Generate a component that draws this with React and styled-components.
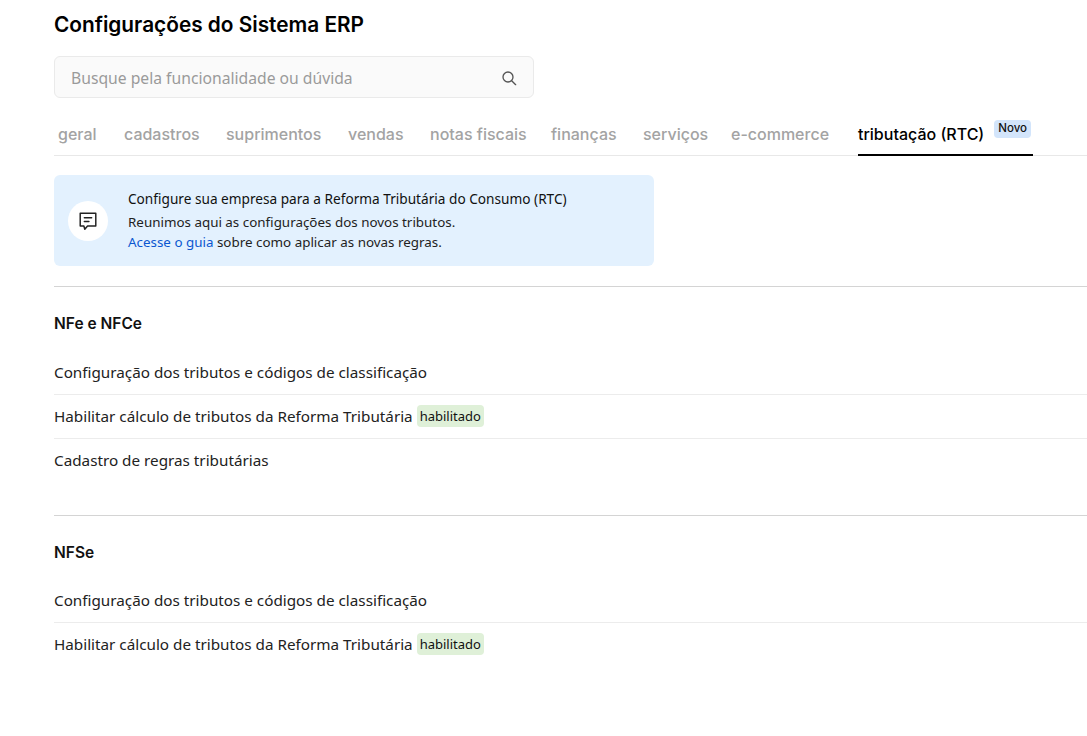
import React from 'react';
import styled, { createGlobalStyle } from 'styled-components';

const heading = "Inter, 'Liberation Sans', sans-serif";
const body = "'Noto Sans', 'Open Sans', sans-serif";

const GlobalStyle = createGlobalStyle`
  html, body { margin: 0; padding: 0; background: #fff; }
  body { font-family: ${body}; color: #1a1a1a; }
`;

const Page = styled.div`
  width: 1087px;
  height: 736px;
  overflow: hidden;
  padding: 12px 0 0 54px;
  box-sizing: border-box;
`;

const Title = styled.h1`
  margin: 0 0 19px;
  font: 600 20.8px/25px ${heading};
  color: #000;
`;

const SearchBox = styled.div`
  width: 480px;
  height: 42px;
  box-sizing: border-box;
  display: flex;
  align-items: center;
  justify-content: space-between;
  padding: 1px 16px 0;
  background: #fafafa;
  border: 1px solid #eaeaea;
  border-radius: 6px;
  font-size: 15.7px;
  color: #9a9a9a;
`;

const Tabs = styled.nav`
  display: flex;
  height: 58px;
  box-sizing: border-box;
  padding-left: 4px;
  border-bottom: 1px solid #e8e8e8;
`;

const Tab = styled.div`
  display: flex;
  align-items: flex-start;
  gap: 10px;
  box-sizing: border-box;
  width: ${({ $w }) => $w}px;
  padding-top: 25.5px;
  font: 500 16px/20px ${heading};
  white-space: nowrap;
  color: ${({ $active }) => ($active ? '#000' : '#a3a3a3')};
  border-bottom: ${({ $active }) => ($active ? '2px solid #000' : 'none')};
  height: 58px;
`;

const NewBadge = styled.span`
  margin-top: -3.5px;
  padding: 0 4px;
  height: 18px;
  background: #d3e5fb;
  border-radius: 4px;
  font: 500 11.5px/17px ${heading};
  color: #111;
`;

const Banner = styled.div`
  width: 600px;
  height: 91px;
  margin-top: 19px;
  box-sizing: border-box;
  display: flex;
  align-items: center;
  gap: 20px;
  padding: 0 14px;
  background: #e3f1fe;
  border-radius: 6px;
`;

const IconCircle = styled.div`
  flex: none;
  width: 40px;
  height: 40px;
  border-radius: 50%;
  background: #fff;
  display: flex;
  align-items: center;
  justify-content: center;
`;

const BannerText = styled.div`
  font-size: 13.4px;
  line-height: 20px;
  color: #222;
`;

const BannerTitle = styled.div`
  font-size: 13.65px;
  color: #111;
  margin-bottom: 3px;
`;

const GuideLink = styled.a`
  color: #0b57d0;
  text-decoration: none;
`;

const Section = styled.section`
  margin-top: ${({ $first }) => ($first ? '20px' : '4px')};
  padding-top: 27px;
  border-top: 1px solid #d4d4d4;
`;

const SectionTitle = styled.h2`
  margin: 0 0 ${({ $gap }) => $gap}px;
  font: 600 15.5px/20px ${heading};
  color: #111;
`;

const Row = styled.div`
  height: 44px;
  box-sizing: border-box;
  display: flex;
  align-items: center;
  gap: 4px;
  padding-bottom: 1px;
  font-size: 15.25px;
  color: #222;
  border-bottom: 1px solid ${({ $last }) => ($last ? 'transparent' : '#ececec')};
`;

const StatusTag = styled.span`
  padding: 0 3px;
  height: 22px;
  background: #dff0d8;
  border-radius: 4px;
  font-size: 13px;
  line-height: 22px;
  color: #111;
`;

const RowList = styled.div`
  padding-bottom: 28px;
`;

const SearchIcon = () => (
  <svg width="16" height="16" viewBox="0 0 24 24" fill="none" stroke="#555" strokeWidth="2" strokeLinecap="round">
    <circle cx="10.5" cy="10.5" r="7.5" />
    <path d="M16 16l6 6" />
  </svg>
);

const MessageIcon = () => (
  <svg width="22" height="22" viewBox="0 0 24 24" fill="none" stroke="#222" strokeWidth="1.6" strokeLinejoin="round" strokeLinecap="round">
    <path d="M3.5 3.5h17v14h-9l-3 3.5-1-3.5h-4z" />
    <path d="M8 8.5h8M8 12.5h5" />
  </svg>
);

const tabs = [
  ['geral', 66],
  ['cadastros', 102],
  ['suprimentos', 122],
  ['vendas', 82],
  ['notas fiscais', 121],
  ['finanças', 92],
  ['serviços', 88],
  ['e-commerce', 127],
];

const EnabledRow = ({ last }) => (
  <Row $last={last}>
    Habilitar cálculo de tributos da Reforma Tributária <StatusTag>habilitado</StatusTag>
  </Row>
);

export default function App() {
  return (
    <Page>
      <GlobalStyle />
      <Title>Configurações do Sistema ERP</Title>
      <SearchBox>
        Busque pela funcionalidade ou dúvida
        <SearchIcon />
      </SearchBox>
      <Tabs>
        {tabs.map(([label, w]) => (
          <Tab key={label} $w={w}>{label}</Tab>
        ))}
        <Tab $active $w={175}>
          tributação (RTC)
          <NewBadge>Novo</NewBadge>
        </Tab>
      </Tabs>
      <Banner>
        <IconCircle><MessageIcon /></IconCircle>
        <BannerText>
          <BannerTitle>Configure sua empresa para a Reforma Tributária do Consumo (RTC)</BannerTitle>
          Reunimos aqui as configurações dos novos tributos.
          <br />
          <GuideLink href="#">Acesse o guia</GuideLink> sobre como aplicar as novas regras.
        </BannerText>
      </Banner>
      <Section $first>
        <SectionTitle $gap={17}>NFe e NFCe</SectionTitle>
        <RowList>
          <Row>Configuração dos tributos e códigos de classificação</Row>
          <EnabledRow />
          <Row $last>Cadastro de regras tributárias</Row>
        </RowList>
      </Section>
      <Section>
        <SectionTitle $gap={16}>NFSe</SectionTitle>
        <RowList>
          <Row>Configuração dos tributos e códigos de classificação</Row>
          <EnabledRow last />
        </RowList>
      </Section>
    </Page>
  );
}
